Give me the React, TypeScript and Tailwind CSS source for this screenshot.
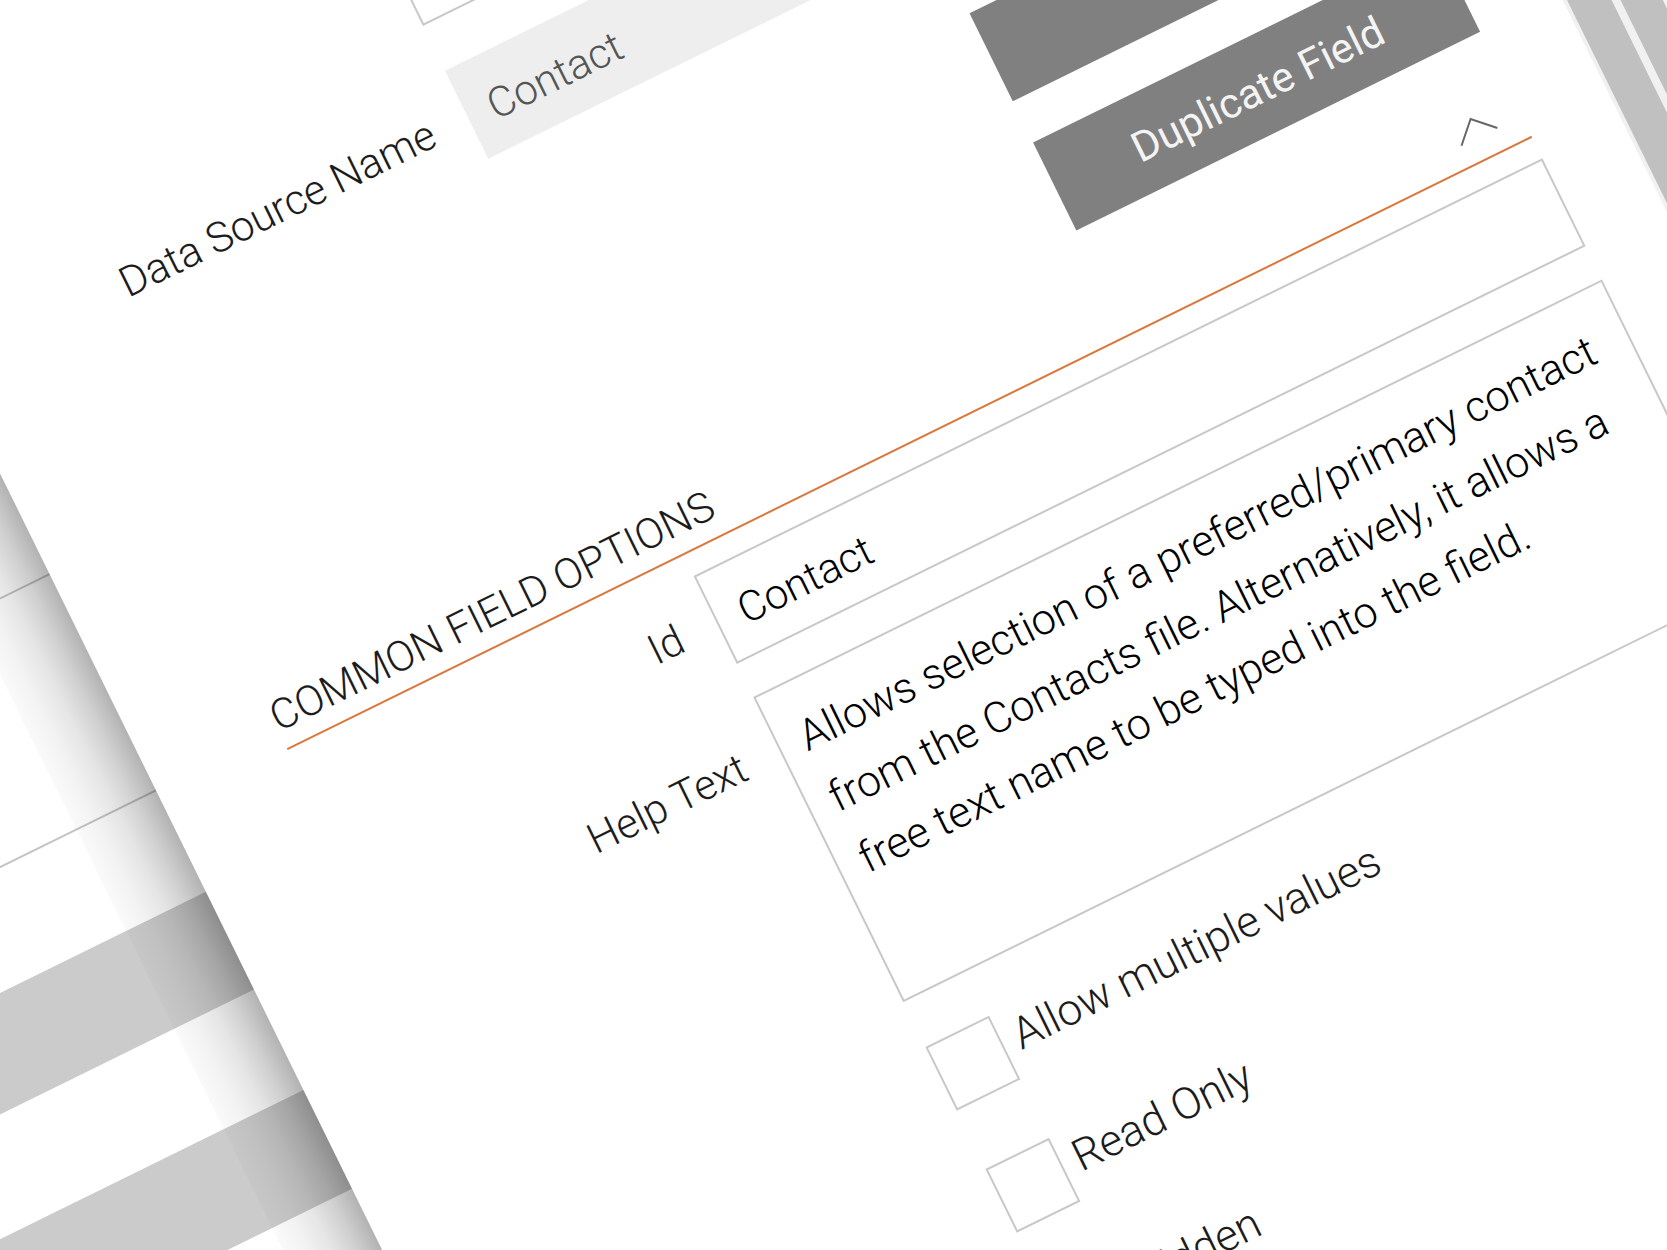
import { useId } from 'react';

interface FieldProps {
  label?: string;
  id: string;
  className?: string;
  labelClassName?: string;
  children: React.ReactNode;
}

function Field({
  label,
  id,
  className = '',
  labelClassName = 'leading-[100px]',
  children,
}: FieldProps) {
  return (
    <div className={`grid grid-cols-[403px_1fr] gap-x-[38px] items-start ${className}`}>
      {label ? (
        <label htmlFor={id} className={`h-[98px] text-right text-[#1c1c1c] ${labelClassName}`}>
          {label}
        </label>
      ) : (
        <span />
      )}
      {children}
    </div>
  );
}

function CheckField({ label }: { label: string }) {
  const id = useId();
  return (
    <div className="flex items-start gap-3.5 pl-[441px]">
      <input
        id={id}
        type="checkbox"
        className="appearance-none w-[71px] h-[71px] border-2 border-[#c8c8c8] bg-white checked:bg-[#808080]"
      />
      <label htmlFor={id} className="text-[44px] leading-[60px] text-[#1c1c1c]">
        {label}
      </label>
    </div>
  );
}

function Backdrop() {
  return (
    <div className="relative w-[351px] shrink-0 bg-white">
      <div className="h-[538px] border-b-2 border-[#c4c4c4]" />
      <div className="h-[241px] border-b-2 border-[#c4c4c4]" />
      <div className="mt-[112px] h-[109px] bg-[#cbcbcb]" />
      <div className="mt-28 h-[110px] bg-[#cbcbcb]" />
      {/* shadow cast by the panel */}
      <div className="absolute inset-y-0 right-0 w-[89px] bg-[linear-gradient(to_left,rgba(0,0,0,0.3),rgba(0,0,0,0.19)_25%,rgba(0,0,0,0.1)_50%,rgba(0,0,0,0.05)_75%,rgba(0,0,0,0.02))]" />
    </div>
  );
}

function Rail() {
  return (
    <div className="flex flex-1 bg-[#f1f1f1] pl-1 gap-2">
      <div className="w-10 bg-[#c0c0c0]" />
      <div className="w-[38px] bg-[#c0c0c0]" />
    </div>
  );
}

export default function App() {
  return (
    <div className="relative w-full h-screen overflow-hidden bg-white">
      <div className="absolute top-0 left-[-560px] w-[2120px] min-h-[1900px] origin-[560px_0px] rotate-[-26.2deg] flex font-['Roboto','Liberation_Sans',sans-serif] font-light text-[42px] leading-[52px]">
        <Backdrop />

        <form className="w-[1611px] shrink-0 bg-white pl-[136px] pr-[88px]">
          <Field id="description">
            <textarea
              id="description"
              aria-label="Description"
              className="block w-full h-[210px] resize-none border-2 border-[#c8c8c8] px-[22px]"
            />
          </Field>
          <Field label="Data Source Name" id="source" className="mt-[50px]">
            <input
              id="source"
              disabled
              defaultValue="Contact"
              className="w-full h-[98px] bg-[#eeeeee] px-6 pt-1.5 text-[#555555]"
            />
          </Field>

          <div className="mt-[82px] flex flex-col items-end gap-[46px]">
            <button type="button" aria-label="Delete Field" className="w-[450px] h-[98px] bg-[#808080]" />
            <button type="button" className="w-[450px] h-[98px] bg-[#808080] pt-1.5 font-normal text-[#f4f4f4]">
              Duplicate Field
            </button>
          </div>

          <div className="mt-[58px] pb-1.5 flex items-center justify-between border-b-2 border-[#d9773c]">
            <h2 className="text-[#1c1c1c]">COMMON FIELD OPTIONS</h2>
            <button type="button" aria-label="Collapse section" className="mr-[26px]">
              <svg className="w-[42px] h-6" viewBox="0 0 42 24" fill="none" stroke="#666666" strokeWidth={2}>
                <path d="M1 22L21 2l20 20" />
              </svg>
            </button>
          </div>

          <Field label="Id" id="field-id" className="mt-[23px]">
            <input
              id="field-id"
              defaultValue="Contact"
              className="w-full h-[98px] border-2 border-[#c8c8c8] px-6 pt-1.5 text-black"
            />
          </Field>
          <Field label="Help Text" id="help" labelClassName="leading-[116px]" className="mt-[37px]">
            <textarea
              id="help"
              defaultValue="Allows selection of a preferred/primary contact from the Contacts file. Alternatively, it allows a free text name to be typed into the field."
              className="block w-full h-[340px] resize-none overflow-hidden border-2 border-[#c8c8c8] px-[23px] pt-[22px] text-[43px] leading-[68px] text-black"
            />
          </Field>

          <div className="mt-[50px] flex flex-col gap-[65px]">
            <CheckField label="Allow multiple values" />
            <CheckField label="Read Only" />
            <CheckField label="Hidden" />
          </div>
        </form>

        <Rail />
      </div>
    </div>
  );
}
